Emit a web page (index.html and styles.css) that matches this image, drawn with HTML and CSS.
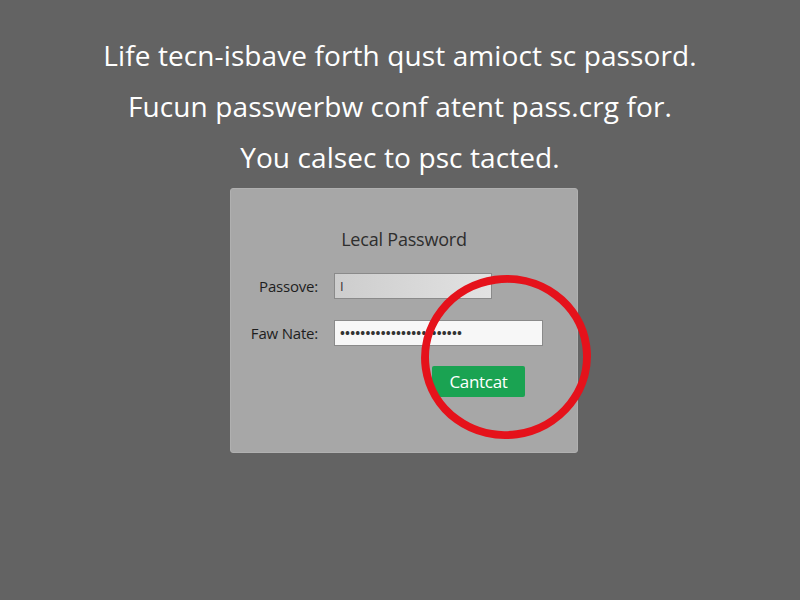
FILE: index.html
```html
<!DOCTYPE html>
<html lang="en">
<head>
    <meta charset="UTF-8">
    <title>Lecal Password</title>
    <link rel="stylesheet" href="styles.css">
</head>
<body>
<div id="maindiv">
    <div class="headline">
        <p>Life tecn-isbave forth qust amioct sc passord.</p>
        <p>Fucun passwerbw conf atent pass.crg for.</p>
        <p>You calsec to psc tacted.</p>
    </div>
    <div class="panel">
        <div class="title">Lecal Password</div>
        <div class="row">
            <label class="lbname">Passove:</label>
            <div class="field field-gray">I</div>
        </div>
        <div class="row">
            <label class="lbname">Faw Nate:</label>
            <div class="field field-white">&bull;&bull;&bull;&bull;&bull;&bull;&bull;&bull;&bull;&bull;&bull;&bull;&bull;&bull;&bull;&bull;&bull;&bull;&bull;&bull;&bull;&bull;&bull;&bull;</div>
        </div>
        <div class="actions">
            <span class="btn">Cantcat</span>
        </div>
        <svg class="ring" width="184" height="180" viewBox="0 0 184 180">
            <ellipse cx="92" cy="90" rx="81" ry="78" fill="none" stroke="#e5121b" stroke-width="8" transform="rotate(-8 92 90)"/>
        </svg>
    </div>
</div>
</body>
</html>
```
FILE: styles.css
```css
html, body {
    margin: 0px;
    padding: 0px;
}

body {
    width: 800px;
    height: 600px;
    background: #636363;
    font-family: "Open Sans", "Noto Sans", sans-serif;
    overflow: hidden;
}

#maindiv {
    display: flex;
    flex-direction: column;
    align-items: center;
}

.headline {
    padding-top: 33px;
    text-align: center;
    color: #ffffff;
    font-size: 28px;
    letter-spacing: 0.1px;
}

.headline p {
    margin: 0px;
    height: 51px;
    line-height: 44px;
}

.panel {
    position: relative;
    width: 348px;
    height: 265px;
    margin-top: 2px;
    margin-left: 8px;
    background: #a7a7a7;
    border: 1px solid #b0b0b0;
    border-radius: 3px;
    box-sizing: border-box;
    padding-top: 35px;
    display: flex;
    flex-direction: column;
}

.title {
    text-align: center;
    color: #2e2e2e;
    font-size: 18px;
    letter-spacing: -0.2px;
    height: 30px;
    line-height: 30px;
    margin-bottom: 19px;
}

.row {
    display: flex;
    align-items: center;
    height: 26px;
    margin-bottom: 21px;
}

.lbname {
    width: 87px;
    text-align: right;
    color: #1e1e1e;
    font-size: 15px;
    letter-spacing: -0.2px;
    margin-right: 16px;
}

.field {
    height: 26px;
    box-sizing: border-box;
    border: 1px solid #8a8a8a;
    font-size: 13px;
    line-height: 24px;
    padding-left: 5px;
    color: #333333;
}

.field-gray {
    width: 158px;
    background: linear-gradient(90deg, #cdcdcd, #e2e2e2);
}

.field-white {
    width: 209px;
    background: #f7f7f7;
    letter-spacing: 0.2px;
    font-weight: bold;
}

.actions {
    display: flex;
    padding-left: 201px;
    margin-top: -1px;
}

.btn {
    display: block;
    width: 93px;
    height: 31px;
    line-height: 31px;
    background: #1aa352;
    color: #ffffff;
    border-radius: 2px;
    text-align: center;
    font-size: 17px;
    letter-spacing: -0.3px;
}

.ring {
    position: absolute;
    left: 183px;
    top: 78px;
}
```
